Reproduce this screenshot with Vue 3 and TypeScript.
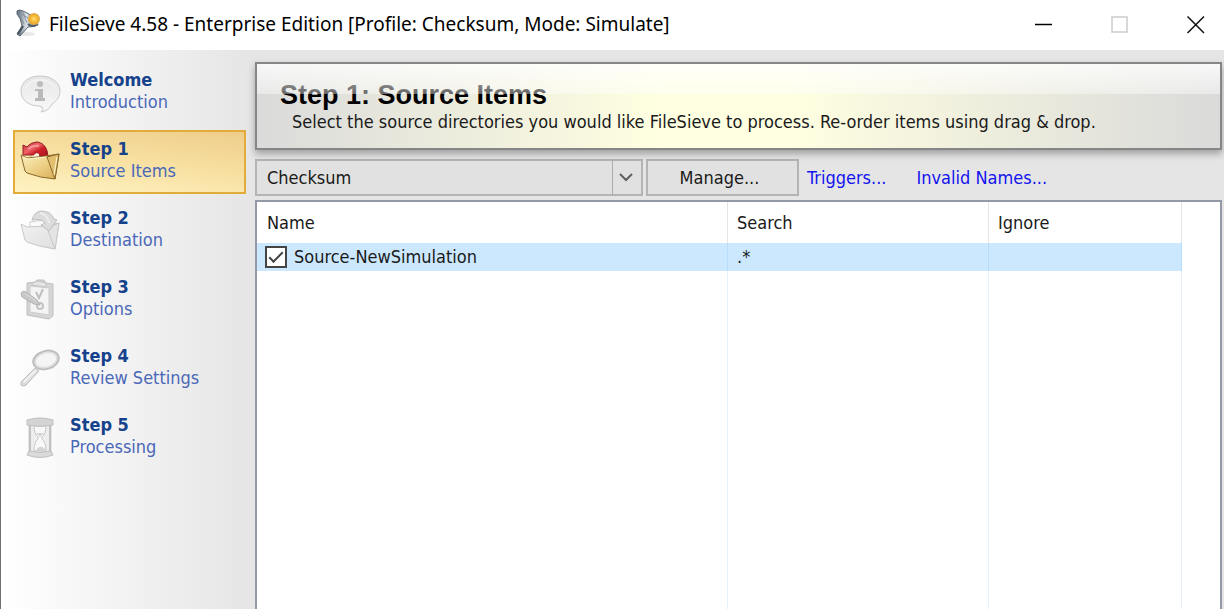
<script setup lang="ts">
import { ref } from 'vue'

type IconName = 'info' | 'source' | 'folder' | 'options' | 'review' | 'hourglass'

interface Step {
  title: string
  caption: string
  icon: IconName
}

interface SourceItem {
  name: string
  search: string
  ignore: string
  enabled: boolean
}

const steps: Step[] = [
  { title: 'Welcome', caption: 'Introduction', icon: 'info' },
  { title: 'Step 1', caption: 'Source Items', icon: 'source' },
  { title: 'Step 2', caption: 'Destination', icon: 'folder' },
  { title: 'Step 3', caption: 'Options', icon: 'options' },
  { title: 'Step 4', caption: 'Review Settings', icon: 'review' },
  { title: 'Step 5', caption: 'Processing', icon: 'hourglass' },
]

const current = ref(1)
const profile = ref('Checksum')
const items = ref<SourceItem[]>([
  { name: 'Source-NewSimulation', search: '.*', ignore: '', enabled: true },
])
</script>

<template>
  <div class="window">
    <header class="titlebar">
      <svg class="app-icon" viewBox="0 0 26 28" aria-hidden="true">
        <defs>
          <linearGradient id="steel" x1="0" x2="1">
            <stop offset="0" stop-color="#4e5d6b" />
            <stop offset=".45" stop-color="#dfe5e9" />
            <stop offset="1" stop-color="#53616d" />
          </linearGradient>
          <radialGradient id="amber">
            <stop offset="0" stop-color="#ffe07a" />
            <stop offset=".6" stop-color="#f5b42c" />
            <stop offset="1" stop-color="#d9a54a" />
          </radialGradient>
        </defs>
        <ellipse cx="11" cy="25" rx="9" ry="2" fill="#e8e8e8" />
        <path d="M2 2Q4 0 8 2L14 5Q22 10 23 16Q19 18 13 18L5 27L2 25L7 17Q6 9 2 5Z" fill="url(#steel)" stroke="#5a6874" />
        <path d="M3 3L9 15M5 4L13 9M8 3L12 14" fill="none" stroke="#8795a0" />
        <path d="M8 17L3 25" stroke="#48555f" stroke-width="2" />
        <path d="M13 15Q16 18 21 16" fill="none" stroke="#4f5d68" stroke-width="2" />
        <circle cx="19" cy="10" r="6" fill="url(#amber)" />
      </svg>
      <h1>FileSieve 4.58 - Enterprise Edition [Profile: Checksum, Mode: Simulate]</h1>
      <div class="window-buttons">
        <button type="button" aria-label="Minimize">
          <svg viewBox="0 0 18 18"><path d="M0 8.5H17" stroke="#000" stroke-width="1.5" /></svg>
        </button>
        <button type="button" aria-label="Maximize" disabled>
          <svg viewBox="0 0 18 18"><path d="M1 1H16V16H1Z" fill="none" stroke="#ccc" stroke-width="1.5" /></svg>
        </button>
        <button type="button" aria-label="Close">
          <svg viewBox="0 0 18 18"><path d="M.5 .5L17 17M17 .5L.5 17" stroke="#111" stroke-width="1.5" /></svg>
        </button>
      </div>
    </header>

    <div class="body">
      <nav class="steps" aria-label="Steps">
        <button
          v-for="(step, index) in steps"
          :key="step.title"
          type="button"
          class="step"
          :class="{ active: index === current }"
          :aria-current="index === current ? 'step' : undefined"
          @click="current = index"
        >
          <svg class="step-icon" viewBox="0 0 42 42" aria-hidden="true">
            <template v-if="step.icon === 'info'">
              <defs>
                <linearGradient id="bubble" x2="0" y2="1">
                  <stop offset="0" stop-color="#e6e6e6" />
                  <stop offset="1" stop-color="#f8f8f8" />
                </linearGradient>
              </defs>
              <path d="M20 4C9 4 1 10 1 19C1 28 9 34 19 34L22 35Q24 38 21 40Q29 39 32 32C37 29 40 24 40 19C40 10 31 4 20 4Z" fill="url(#bubble)" stroke="#c8c8c8" />
              <path d="M5 17Q9 8 20 8T36 17" fill="none" stroke="#f2f2f2" stroke-width="2" />
              <circle cx="20" cy="12" r="3" fill="#bcbcbc" />
              <path d="M15 17H23V26H25V29H15V26H18V19H15Z" fill="#bababa" />
            </template>

            <template v-else-if="step.icon === 'source'">
              <defs>
                <linearGradient id="gold" x2="1" y2="1">
                  <stop offset="0" stop-color="#fbefc0" />
                  <stop offset=".5" stop-color="#eed188" />
                  <stop offset="1" stop-color="#d6a951" />
                </linearGradient>
                <linearGradient id="red" x2="1" y2="1">
                  <stop offset="0" stop-color="#c92a33" />
                  <stop offset=".4" stop-color="#ee6468" />
                  <stop offset=".6" stop-color="#cf2029" />
                  <stop offset="1" stop-color="#a3141c" />
                </linearGradient>
              </defs>
              <path d="M10 17L13 12L23 9L27 16Z" fill="#fdf8df" stroke="#b99e5c" stroke-width=".6" />
              <path d="M3 4L7 6Q11 1 18 1Q27 3 28 15L20 16Q19 12 15 11L17 14L3 14Z" fill="url(#red)" stroke="#8f2024" />
              <path d="M8 8Q13 4 19 5" fill="none" stroke="#f5979a" stroke-width="2" />
              <path d="M14 14Q16 11 19 13V17H13Z" fill="#fff8de" />
              <path d="M1 14L7 17L26 15L39 13L35 38Q20 37 7 32L5 30Z" fill="url(#gold)" stroke="#8b6a2c" />
              <path d="M27 16L39 13L35 38Z" fill="#e3c070" stroke="#866626" />
              <path d="M3 16L8 18L26 16M37 16L34 34" fill="none" stroke="#fff6cf" />
            </template>

            <template v-else-if="step.icon === 'folder'">
              <defs>
                <linearGradient id="silver" x2="1" y2="1">
                  <stop offset="0" stop-color="#f2f2f2" />
                  <stop offset="1" stop-color="#dedede" />
                </linearGradient>
              </defs>
              <path d="M10 17V12L23 10L30 17Z" fill="#fafafa" stroke="#cecece" />
              <path d="M1 14L7 17L26 16L39 13L35 39Q20 37 7 32L5 30Z" fill="url(#silver)" stroke="#c7c7c7" />
              <path d="M27 18L39 13L35 39Z" fill="#e4e4e4" stroke="#c8c8c8" />
              <path d="M12 10Q14 2 21 1Q31 1 34 9L37 10L29 21L21 15L25 13Q21 8 12 10Z" fill="#dcdcdc" stroke="#bebebe" />
              <path d="M20 3Q28 5 29 13" fill="none" stroke="#ececec" stroke-width="2" />
            </template>

            <template v-else-if="step.icon === 'options'">
              <path d="M7 4L15 3L17 1L24 1L26 4L33 5V37L29 40L7 36Z" fill="#d5d5d5" stroke="#c0c0c0" />
              <path d="M10 7L29 9V36L10 33Z" fill="#f4f4f4" stroke="#cdcdcd" />
              <path d="M12 4L18 2L26 4V8L12 6Z" fill="#e4e4e4" stroke="#c4c4c4" />
              <path d="M16 13L19 19L23 10" fill="none" stroke="#bebebe" stroke-width="2" />
              <circle cx="20" cy="27" r="3" fill="#f4f4f4" stroke="#c3c3c3" stroke-width="2" />
              <path d="M1 14Q3 11 6 13L17 21L20 26L14 25L2 18Z" fill="#c9c9c9" stroke="#b1b1b1" />
              <path d="M5 14L16 22" stroke="#dedede" />
            </template>

            <template v-else-if="step.icon === 'review'">
              <path d="M1 34L15 20L19 23L6 37Q3 39 1 37Z" fill="#dedede" stroke="#bdbdbd" />
              <path d="M4 34L16 22" stroke="#f1f1f1" stroke-width="2" />
              <ellipse cx="26" cy="12" rx="13" ry="9" transform="rotate(-16 26 12)" fill="#ededed" stroke="#bdbdbd" stroke-width="2" />
              <ellipse cx="26" cy="12" rx="11" ry="7" transform="rotate(-16 26 12)" fill="#f5f5f5" stroke="#dadada" />
            </template>

            <template v-else>
              <path d="M9 6H31V36H9Z" fill="#eee" stroke="#cfcfcf" />
              <path d="M14 9H26Q26 17 22 20V22Q26 25 26 34H14Q14 25 18 22V20Q14 17 14 9Z" fill="#f8f8f8" stroke="#c7c7c7" />
              <path d="M16 16H24L20 20ZM16 33Q20 27 25 32V34H16Z" fill="#d4d4d4" />
              <path d="M10 8V34M30 8V34" stroke="#c2c2c2" stroke-width="2" />
              <path d="M7 3Q20 -1 33 3V8Q20 11 7 8Z" fill="#d4d4d4" stroke="#bfbfbf" />
              <path d="M9 34Q20 37 31 34L33 38Q20 43 7 38Z" fill="#dadada" stroke="#bfbfbf" />
            </template>
          </svg>
          <span class="step-text">
            <strong>{{ step.title }}</strong>
            <span>{{ step.caption }}</span>
          </span>
        </button>
      </nav>

      <main class="content">
        <section class="banner">
          <h2>Step 1: Source Items</h2>
          <p>Select the source directories you would like FileSieve to process. Re-order items using drag &amp; drop.</p>
        </section>

        <div class="toolbar">
          <div class="profile">
            <select v-model="profile" aria-label="Profile">
              <option>Checksum</option>
            </select>
            <svg viewBox="0 0 31 37" aria-hidden="true">
              <path d="M.5 0V37" stroke="#adadad" />
              <path d="M8 15L14 21L20 15" fill="none" stroke="#606060" stroke-width="2" />
            </svg>
          </div>
          <button type="button" class="manage">Manage...</button>
          <a href="#triggers">Triggers...</a>
          <a href="#invalid-names">Invalid Names...</a>
        </div>

        <div class="list">
          <table>
            <colgroup>
              <col class="col-name" />
              <col class="col-search" />
              <col class="col-ignore" />
              <col />
            </colgroup>
            <thead>
              <tr>
                <th scope="col">Name</th>
                <th scope="col">Search</th>
                <th scope="col">Ignore</th>
                <td></td>
              </tr>
            </thead>
            <tbody>
              <tr v-for="item in items" :key="item.name" class="selected">
                <td>
                  <label>
                    <input v-model="item.enabled" type="checkbox" />
                    <span>{{ item.name }}</span>
                  </label>
                </td>
                <td>{{ item.search }}</td>
                <td>{{ item.ignore }}</td>
                <td></td>
              </tr>
              <tr class="rest" aria-hidden="true">
                <td></td>
                <td></td>
                <td></td>
                <td></td>
              </tr>
            </tbody>
          </table>
        </div>
      </main>
    </div>
  </div>
</template>

<style>
body {
  margin: 0;
}
</style>

<style scoped>
.window {
  box-sizing: border-box;
  display: flex;
  flex-direction: column;
  min-height: 100vh;
  border-left: 1px solid #707070;
  background: #fff;
  color: #1a1a1a;
  font: 18px/22px "DejaVu Sans Condensed", "DejaVu Sans", sans-serif;
}

button,
select {
  font: inherit;
  color: inherit;
}

.titlebar {
  display: flex;
  align-items: center;
  height: 50px;
  padding-left: 14px;
}

.app-icon {
  width: 26px;
  height: 28px;
  margin-right: 8px;
  margin-bottom: 4px;
}

.titlebar h1 {
  flex: 1;
  margin: 0;
  padding-bottom: 2px;
  font: 400 19px/26px "Noto Sans", sans-serif;
  color: #000;
  white-space: nowrap;
}

.window-buttons {
  display: flex;
}

.window-buttons button {
  display: grid;
  place-items: center;
  width: 76px;
  height: 46px;
  padding: 0;
  border: 0;
  background: none;
}

.window-buttons button:last-child {
  margin-right: -10px;
}

.window-buttons svg {
  width: 18px;
  height: 18px;
}

.body {
  flex: 1;
  display: grid;
  grid-template-columns: 254px minmax(0, 1fr);
  background: #e5e5e5;
}

.steps {
  display: flex;
  flex-direction: column;
  gap: 5px;
  padding: 11px 9px 0 12px;
  background: linear-gradient(90deg, #fff, #e5e5e5);
}

.step {
  box-sizing: border-box;
  display: flex;
  align-items: flex-start;
  gap: 8px;
  height: 64px;
  padding: 6px 5px;
  border: 2px solid transparent;
  background: none;
  text-align: left;
}

.step.active {
  border-color: #e3ab3a;
  background: linear-gradient(8deg, #fff3c2 0%, #f7dfa0 55%, #eecd8b 100%);
}

.step-icon {
  flex: none;
  width: 42px;
  height: 42px;
  margin-top: 3px;
}

.step-text {
  display: flex;
  flex-direction: column;
  color: #4a68b8;
  white-space: nowrap;
}

.step-text strong {
  color: #15428b;
}

.content {
  display: flex;
  flex-direction: column;
  padding: 12px 2px 0 0;
}

.banner {
  position: relative;
  height: 84px;
  border: 2px solid #868686;
  background: linear-gradient(90deg, #dadada, #ffffe1 42%, #ffffe1 55%, #dadada);
  box-shadow: 0 4px 7px rgba(0, 0, 0, .3);
}

.banner::before {
  content: "";
  position: absolute;
  inset: 0 0 auto;
  height: 30px;
  background: linear-gradient(rgba(255, 255, 255, .8), rgba(255, 255, 255, .4));
}

.banner h2 {
  margin: 0;
  padding: 15px 23px 0;
  font: 700 27px/32px "Liberation Sans", sans-serif;
  color: #000;
}

.banner p {
  margin: 0;
  padding-left: 35px;
  white-space: nowrap;
}

.toolbar {
  display: flex;
  align-items: center;
  height: 37px;
  margin: 9px 0 4px;
}

.profile {
  display: grid;
  width: 388px;
  height: 37px;
  margin-right: 3px;
}

.profile > * {
  grid-area: 1 / 1;
}

.profile select {
  appearance: none;
  width: 100%;
  height: 100%;
  padding: 0 40px 0 10px;
  border: 2px solid #b4b4b4;
  border-radius: 0;
  background: #e1e1e1;
}

.profile svg {
  justify-self: end;
  width: 31px;
  height: 37px;
  pointer-events: none;
}

.manage {
  width: 153px;
  height: 37px;
  padding: 0 6px 0 0;
  border: 2px solid #b4b4b4;
  background: #e1e1e1;
}

.toolbar a {
  margin-left: 8px;
  color: #1414f0;
  text-decoration: none;
}

.toolbar a + a {
  margin-left: 30px;
}

.list {
  flex: 1;
  display: flex;
  border: 2px solid #949aa5;
  border-bottom: 0;
  background: #fff;
}

table {
  width: 100%;
  border-spacing: 0;
  table-layout: fixed;
}

.col-name {
  width: 471px;
}

.col-search {
  width: 261px;
}

.col-ignore {
  width: 193px;
}

th,
td {
  box-sizing: border-box;
  padding: 0 9px;
  border-right: 1px solid #e5f0fb;
  font-weight: 400;
  text-align: left;
}

th {
  height: 41px;
  padding: 0 10px;
  border-right-color: #e5e5e5;
}

th + th {
  padding-left: 9px;
}

th:last-child,
td:last-child {
  border-right: 0;
}

.selected td {
  height: 28px;
  border-right-color: #b9dcf9;
  background: #cce8ff;
}

.selected td:first-child {
  padding-left: 8px;
}

.selected td:last-child {
  background: none;
}

.rest td {
  height: auto;
}

label {
  display: flex;
  align-items: center;
  gap: 7px;
}

input {
  appearance: none;
  flex: none;
  display: grid;
  place-items: center;
  width: 22px;
  height: 22px;
  margin: 0;
  border: 2px solid #444;
  background: #fff;
}

input:checked::before {
  content: "";
  width: 12px;
  height: 5px;
  margin-bottom: 4px;
  border: solid #444;
  border-width: 0 0 2px 2px;
  transform: rotate(-45deg);
}
</style>
